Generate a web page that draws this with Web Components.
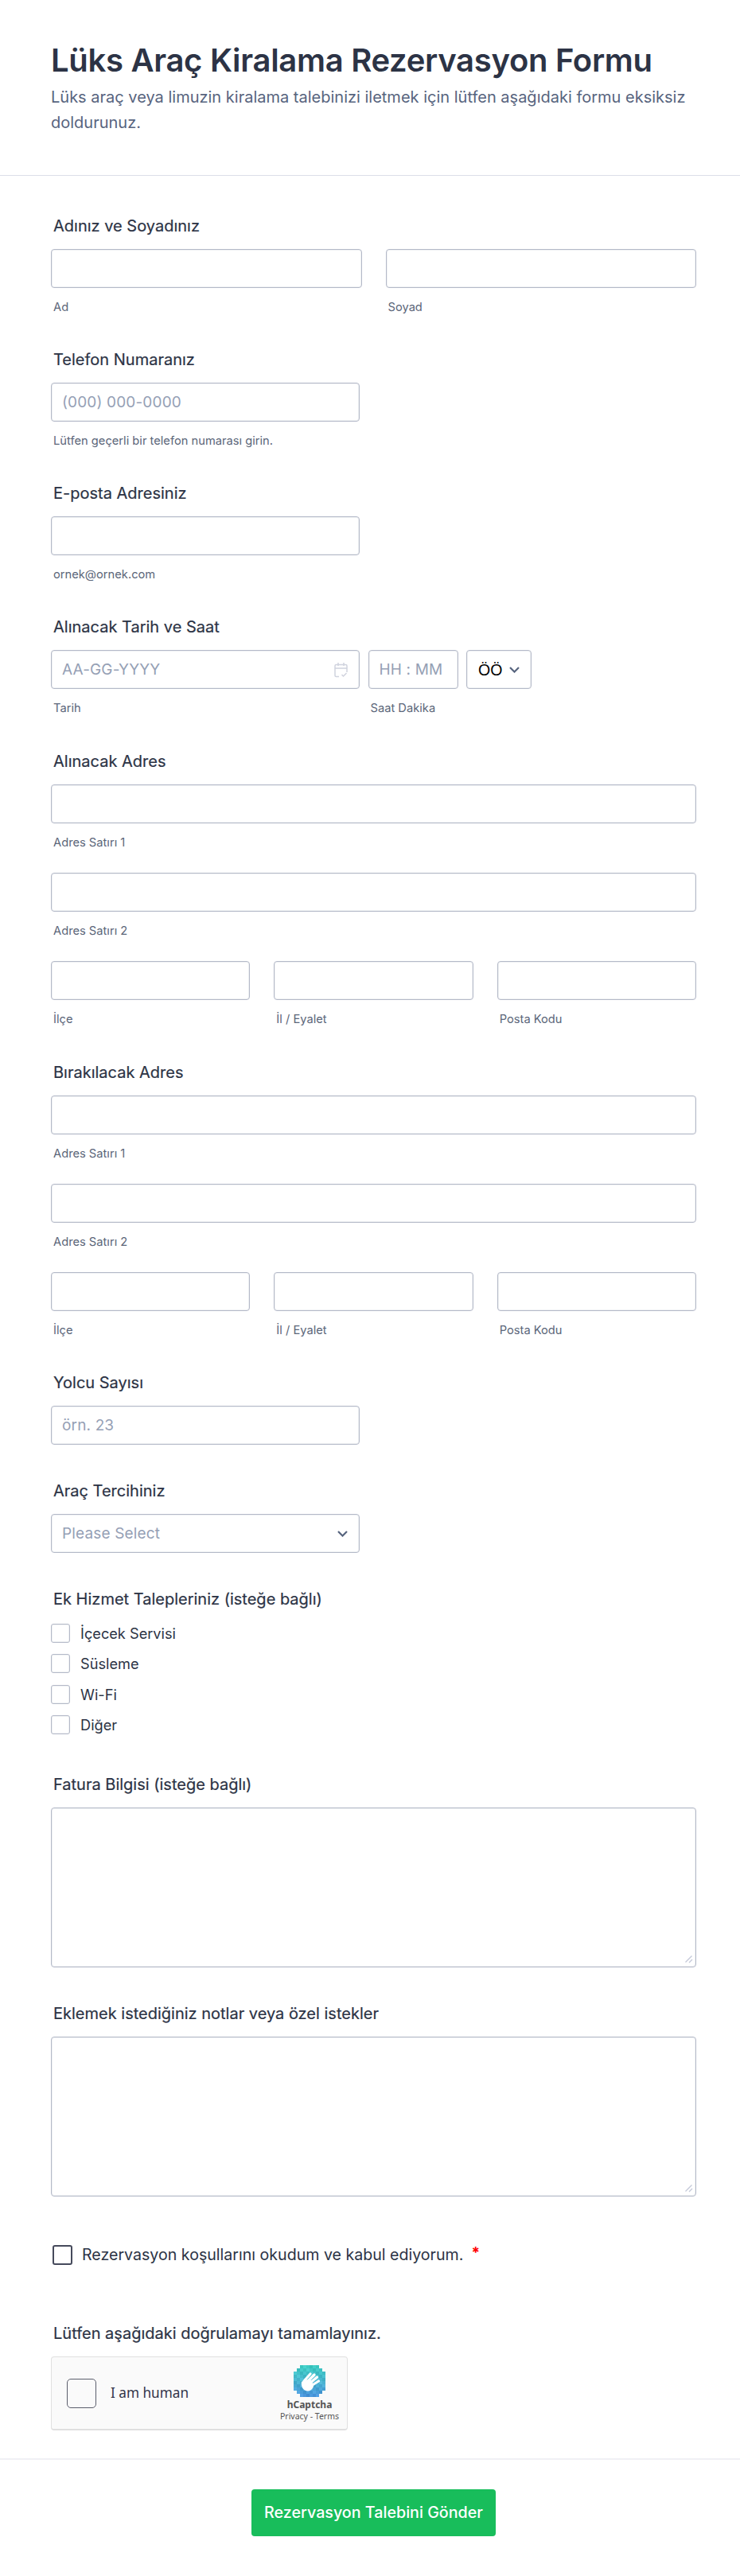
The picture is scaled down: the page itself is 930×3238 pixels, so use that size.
<!DOCTYPE html>
<html lang="tr">
<head>
<meta charset="utf-8">
<style>
html,body{margin:0;padding:0;background:#fff;}
body{font-family:Inter,"Liberation Sans",sans-serif;color:#2c3345;}
form-page{display:block;}
</style>
</head>
<body>
<template id="t-field">
<style>
:host{display:block;padding:0 55px 0 64px;box-sizing:border-box;margin-bottom:var(--after,45px);}
.l{font:400 20px/24px Inter,sans-serif;color:#2c3345;padding-left:3px;margin-bottom:var(--lg,17px);-webkit-text-stroke:.2px #2c3345;}
.l:empty{display:none;}
.c{display:flex;flex-direction:column;gap:var(--gap,0);}
</style>
<div class="l"><slot name="label"></slot></div>
<div class="c"><slot></slot></div>
</template>

<template id="t-input">
<style>
:host{display:block;flex:var(--flex,none);width:var(--w,auto);min-width:0;}
.b{box-sizing:border-box;height:49px;border:1px solid #b4b9c8;box-shadow:inset 0 0 0 1px rgba(184,189,201,.22);border-radius:4px;background:#fff;display:flex;align-items:center;justify-content:space-between;padding:0 14px 0 13px;font:400 19px/24px Inter,sans-serif;letter-spacing:.15px;color:#95a0b5;white-space:nowrap;overflow:hidden;}
.s{font:400 14.7px/18px Inter,sans-serif;color:#5b6679;padding:15px 0 0 3px;white-space:nowrap;}
.s:empty{display:none;}
::slotted(svg){display:block;flex:none;}
</style>
<div class="b"><span id="p"></span><slot></slot></div>
<div class="s" id="s"></div>
</template>

<template id="t-check">
<style>
:host{display:flex;align-items:center;gap:13px;height:24px;font:400 18.2px/24px Inter,sans-serif;color:#2c3345;white-space:nowrap;}
i{box-sizing:border-box;display:block;width:24px;height:24px;border:1px solid #b4b9c8;box-shadow:inset 0 0 0 1px rgba(184,189,201,.22);border-radius:3px;background:#fff;flex:none;}
:host([dark]){font-size:19.6px;height:25px;gap:12px;padding-left:2px;}
:host([dark]) i{border:2px solid #464a5c;box-shadow:none;width:25px;height:25px;border-radius:3px;}
</style>
<i></i><span><slot></slot></span>
</template>

<template id="t-area">
<style>
:host{display:block;}
.b{box-sizing:border-box;height:201px;border:1px solid #b4b9c8;box-shadow:inset 0 0 0 1px rgba(184,189,201,.22);border-radius:4px;background:#fff;position:relative;}
svg{position:absolute;right:3px;bottom:4px;display:block;}
</style>
<div class="b"><svg width="10" height="10" viewBox="0 0 10 10" fill="none" stroke="#c3c8d8" stroke-width="1.3"><path d="M.5 8.500 8.500.5M5 9 9 5"/></svg></div>
</template>

<template id="t-captcha">
<style>
:host{box-sizing:border-box;display:flex;align-items:flex-start;width:373px;height:93px;background:#fafafa;border:1px solid #e0e0e0;border-bottom-width:2px;border-radius:4px;padding:0 0 0 19px;font-family:"Noto Sans",sans-serif;}
i{box-sizing:border-box;display:block;width:37px;height:37px;margin-top:27px;border:1.5px solid #5b5e6c;border-radius:5px;background:#fafafa;flex:none;}
.t{margin:35px 0 0 18px;font:400 17.2px/20px "Noto Sans",sans-serif;color:#33354a;}
.r{margin-left:auto;width:94px;display:flex;flex-direction:column;align-items:center;padding-top:10px;}
.n{font:700 12px/15px "Noto Sans",sans-serif;color:#555;margin-top:2px;}
.p{font:400 10.5px/15px "Noto Sans",sans-serif;color:#555;white-space:nowrap;}
svg{display:block;}
</style>
<i></i><span class="t">I am human</span>
<div class="r"><svg id="logo" width="40" height="40" viewBox="0 0 40 40"></svg><div class="n">hCaptcha</div><div class="p">Privacy - Terms</div></div>
</template>

<template id="t-button">
<style>
:host{display:flex;justify-content:center;padding:0 55px 0 64px;}
b{display:flex;align-items:center;justify-content:center;box-sizing:border-box;width:307px;height:59px;border-radius:4px;background:#18bd5b;color:#fff;font:500 19.7px/24px Inter,sans-serif;white-space:nowrap;}
</style>
<b><slot></slot></b>
</template>

<template id="t-header">
<style>
:host{display:block;padding:52px 55px 0 64px;height:221px;box-sizing:border-box;border-bottom:1px solid #dcdee8;}
h1{margin:0 0 6px;font:600 40px/48px Inter,sans-serif;color:#2c3345;letter-spacing:-.3px;}
p{margin:0;font:400 20px/32px Inter,sans-serif;color:#57647e;}
</style>
<h1><slot name="title"></slot></h1>
<p><slot name="sub"></slot></p>
</template>

<template id="t-row">
<style>
:host{display:flex;gap:var(--g,30px);align-items:flex-start;}
</style>
<slot></slot>
</template>

<template id="t-foot">
<style>
:host{display:block;border-top:2px solid #f0f0f5;padding-top:37px;height:148px;box-sizing:border-box;}
</style>
<slot></slot>
</template>

<template id="t-page">
<style>
:host{display:block;}
.sp{height:51px;}
</style>
<slot name="head"></slot><div class="sp"></div><slot></slot>
</template>

<form-page>
<form-header slot="head">
  <span slot="title">Lüks Araç Kiralama Rezervasyon Formu</span>
  <span slot="sub">Lüks araç veya limuzin kiralama talebinizi iletmek için lütfen aşağıdaki formu eksiksiz doldurunuz.</span>
</form-header>

<form-field>
  <span slot="label">Adınız ve Soyadınız</span>
  <field-row>
    <text-box style="--flex:1" sub="Ad"></text-box>
    <text-box style="--flex:1" sub="Soyad"></text-box>
  </field-row>
</form-field>

<form-field>
  <span slot="label">Telefon Numaranız</span>
  <text-box style="--w:388px" ph="(000) 000-0000" sub="Lütfen geçerli bir telefon numarası girin."></text-box>
</form-field>

<form-field>
  <span slot="label">E-posta Adresiniz</span>
  <text-box style="--w:388px" sub="ornek@ornek.com"></text-box>
</form-field>

<form-field style="--after:46px">
  <span slot="label">Alınacak Tarih ve Saat</span>
  <field-row style="--g:10.5px">
    <text-box style="--w:388px" ph="AA-GG-YYYY" sub="Tarih">
      <svg width="17" height="20" viewBox="0 0 17 20" fill="none" stroke="#d0d3de" stroke-width="1.5"><path d="M6 18.500H2.500A1.500 1.500 0 0 1 1 17V5a1.500 1.500 0 0 1 1.500-1.500h12A1.500 1.500 0 0 1 16 5v8M1 8h15M5 1v4M12 1v4M9.500 16l2 2 4-4"/></svg>
    </text-box>
    <text-box style="--w:113px" ph="HH : MM" sub="Saat Dakika"></text-box>
    <text-box id="ampm" style="--w:82px" ph="ÖÖ">
      <svg width="13" height="8" viewBox="0 0 13 8" fill="none" stroke="#57647e" stroke-width="2.200"><path d="M1 1 6.500 6.500 12 1"/></svg>
    </text-box>
  </field-row>
</form-field>

<form-field style="--gap:29px;--after:46px">
  <span slot="label">Alınacak Adres</span>
  <text-box sub="Adres Satırı 1"></text-box>
  <text-box sub="Adres Satırı 2"></text-box>
  <field-row>
    <text-box style="--flex:1" sub="İlçe"></text-box>
    <text-box style="--flex:1" sub="İl / Eyalet"></text-box>
    <text-box style="--flex:1" sub="Posta Kodu"></text-box>
  </field-row>
</form-field>

<form-field style="--gap:29px">
  <span slot="label">Bırakılacak Adres</span>
  <text-box sub="Adres Satırı 1"></text-box>
  <text-box sub="Adres Satırı 2"></text-box>
  <field-row>
    <text-box style="--flex:1" sub="İlçe"></text-box>
    <text-box style="--flex:1" sub="İl / Eyalet"></text-box>
    <text-box style="--flex:1" sub="Posta Kodu"></text-box>
  </field-row>
</form-field>

<form-field style="--after:46px">
  <span slot="label">Yolcu Sayısı</span>
  <text-box style="--w:388px" ph="örn. 23"></text-box>
</form-field>

<form-field style="--after:46px">
  <span slot="label">Araç Tercihiniz</span>
  <text-box style="--w:388px" ph="Please Select">
    <svg width="13" height="8" viewBox="0 0 13 8" fill="none" stroke="#57647e" stroke-width="2.200"><path d="M1 1 6.500 6.500 12 1"/></svg>
  </text-box>
</form-field>

<form-field style="--gap:14.300px;--lg:19px;--after:51px">
  <span slot="label">Ek Hizmet Talepleriniz (isteğe bağlı)</span>
  <check-item>İçecek Servisi</check-item>
  <check-item>Süsleme</check-item>
  <check-item>Wi-Fi</check-item>
  <check-item>Diğer</check-item>
</form-field>

<form-field style="--after:46px">
  <span slot="label">Fatura Bilgisi (isteğe bağlı)</span>
  <text-area></text-area>
</form-field>

<form-field style="--after:61px">
  <span slot="label">Eklemek istediğiniz notlar veya özel istekler</span>
  <text-area></text-area>
</form-field>

<form-field style="--after:74px">
  <check-item dark>Rezervasyon koşullarını okudum ve kabul ediyorum.<span style="color:#f00;font-weight:700;font-size:19px;position:relative;top:-3px;margin-left:10px">*</span></check-item>
</form-field>

<form-field style="--after:35px">
  <span slot="label">Lütfen aşağıdaki doğrulamayı tamamlayınız.</span>
  <h-captcha></h-captcha>
</form-field>

<form-foot><submit-button>Rezervasyon Talebini Gönder</submit-button></form-foot>
</form-page>

<script>
function reg(name,tpl,init){
  customElements.define(name,class extends HTMLElement{
    constructor(){super();const r=this.attachShadow({mode:'open'});r.appendChild(document.getElementById(tpl).content.cloneNode(true));}
    connectedCallback(){if(init)init.call(this,this.shadowRoot);}
  });
}
reg('form-page','t-page');
reg('form-header','t-header');
reg('form-field','t-field');
reg('field-row','t-row');
reg('form-foot','t-foot');
reg('check-item','t-check');
reg('text-area','t-area');
reg('submit-button','t-button');
reg('text-box','t-input',function(r){
  const p=r.getElementById('p');
  p.textContent=this.getAttribute('ph')||'';
  r.getElementById('s').textContent=this.getAttribute('sub')||'';
  if(this.id==='ampm'){p.style.cssText='color:#000;font-family:"Liberation Sans",sans-serif;font-size:19.5px;letter-spacing:0;margin-left:1px';}
});
reg('h-captcha','t-captcha',function(r){
  const svg=r.getElementById('logo');
  let out='';
  const s=4;
  const mix=(a,b,t)=>a.map((v,i)=>Math.round(v+(b[i]-v)*t));
  const A=[62,202,196],B=[74,182,208],C=[74,150,218];
  for(let y=0;y<40;y+=s){
    const d=Math.abs(y+2-20);
    const half=d<=10?20:d<=14?16:12;
    for(let x=20-half;x<20+half;x+=s){
      const t=y/36;
      let c=t<.5?mix(A,B,t*2):mix(B,C,(t-.5)*2);
      const v=((x*7+y*13)%5-2)*5;
      c=c.map(n=>Math.min(255,n+v));
      out+=`<rect x="${x}" y="${y}" width="${s}" height="${s}" fill="rgb(${c})"/>`;
    }
  }
  out+='<g stroke="#fff" stroke-width="3.200" stroke-linecap="round" fill="none"><path d="M13 20 21 11M16.500 21.500 26 12M20 23 29.500 15M22 26 31.500 20"/></g><path d="M10 21c2-1 3-2 4-3l9 1 2 8c-2 4-5 6-8 5.500-5-.5-8-6-7-11.500z" fill="#fff"/>';
  svg.innerHTML=out;
});
</script>
</body>
</html>
